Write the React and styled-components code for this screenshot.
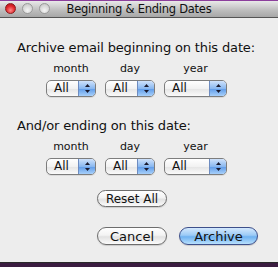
import styled, { createGlobalStyle } from "styled-components";

const GlobalStyle = createGlobalStyle`
  html, body {
    margin: 0;
    padding: 0;
    background: #4a2352;
  }
  body {
    font-family: "Lucida Grande", "DejaVu Sans", sans-serif;
    -webkit-font-smoothing: antialiased;
  }
`;

const Desktop = styled.div`
  width: 278px;
  height: 267px;
  padding-top: 1px;
  box-sizing: border-box;
  background: linear-gradient(#8c3f9c 0 1px, #3b1c40 1px);
`;

const Window = styled.div`
  width: 278px;
  height: 262px;
  display: flex;
  flex-direction: column;
  background: #ededed;
  border-bottom: 1px solid #2a2a2a;
  box-sizing: border-box;
`;

const TitleBar = styled.div`
  position: relative;
  height: 16px;
  display: flex;
  align-items: center;
  justify-content: center;
  background: linear-gradient(#e9e9e9, #bcbcbc 60%, #a7a7a7);
  border-bottom: 1px solid #555;
  flex-shrink: 0;
`;

const Lights = styled.div`
  position: absolute;
  left: 5px;
  top: 2px;
  display: flex;
  gap: 6px;
`;

const Light = styled.span`
  width: 11px;
  height: 11px;
  border-radius: 50%;
  box-sizing: border-box;
  border: 1px solid ${(p) => (p.$red ? "#8a1d1d" : "#9a9a9a")};
  background: ${(p) =>
    p.$red
      ? "radial-gradient(circle at 50% 70%, #ff8a8a, #e0262a 55%, #a5151a)"
      : "radial-gradient(circle at 50% 70%, #f4f4f4, #d6d6d6 60%, #bcbcbc)"};
`;

const Title = styled.span`
  font-size: 11.5px;
  letter-spacing: -0.25px;
  color: #111;
`;

const Content = styled.div`
  display: flex;
  flex-direction: column;
  padding: 22px 0 0 17px;
`;

const Heading = styled.div`
  font-size: 13px;
  line-height: 16px;
  letter-spacing: -0.15px;
  color: #111;
  margin-top: ${(p) => p.$top || 0}px;
`;

const DateRow = styled.div`
  display: flex;
  gap: 9px;
  padding-left: 29px;
  margin-top: 6px;
`;

const Field = styled.div`
  display: flex;
  flex-direction: column;
  align-items: stretch;
  width: ${(p) => p.$w}px;
  gap: 4px;
`;

const Label = styled.span`
  font-size: 11px;
  line-height: 14px;
  color: #111;
  text-align: center;
`;

const Select = styled.div`
  height: 17px;
  display: flex;
  border: 1px solid #7d7d7d;
  border-radius: 5px;
  box-sizing: border-box;
  overflow: hidden;
  background: linear-gradient(#ffffff, #f2f2f2 50%, #e4e4e4 51%, #fafafa);
  box-shadow: 0 1px 0 rgba(0, 0, 0, 0.08);
`;

const SelectText = styled.span`
  flex: 1;
  font-size: 12px;
  line-height: 15px;
  padding-left: 7px;
  color: #111;
`;

const Arrows = styled.span`
  width: 16px;
  display: flex;
  align-items: center;
  justify-content: center;
  border-left: 1px solid #6e8cc0;
  background: linear-gradient(#cfe2fb, #8ab8f0 50%, #5d9ae8 51%, #a8d0fa);
`;

const ResetWrap = styled.div`
  display: flex;
  padding-left: 80px;
  margin-top: 15px;
`;

const Actions = styled.div`
  display: flex;
  gap: 12px;
  padding-left: 80px;
  margin-top: 20px;
`;

const Button = styled.button`
  height: ${(p) => p.$h || 17}px;
  width: ${(p) => p.$w}px;
  padding: 0;
  font-family: inherit;
  font-size: ${(p) => p.$fs || 12}px;
  line-height: 1;
  color: #111;
  border-radius: 9px;
  border: 1px solid ${(p) => (p.$primary ? "#3d4f8a" : "#6d6d6d")};
  background: ${(p) =>
    p.$primary
      ? "linear-gradient(#d4e8fd, #9ccbf6 45%, #6fb2f1 55%, #b8e0fd)"
      : "linear-gradient(#ffffff, #f3f3f3 45%, #e2e2e2 55%, #fbfbfb)"};
  box-shadow: 0 1px 1px rgba(0, 0, 0, 0.15);
`;

function ArrowIcon() {
  return (
    <svg width="7" height="11" viewBox="0 0 7 11">
      <path d="M3.5 1 L6 4 L1 4 Z" fill="#1a1a2e" />
      <path d="M3.5 10 L6 7 L1 7 Z" fill="#1a1a2e" />
    </svg>
  );
}

function DateSelects() {
  const fields = [
    { label: "month", w: 50 },
    { label: "day", w: 50 },
    { label: "year", w: 63 },
  ];
  return (
    <DateRow>
      {fields.map((f) => (
        <Field key={f.label} $w={f.w}>
          <Label>{f.label}</Label>
          <Select>
            <SelectText>All</SelectText>
            <Arrows>
              <ArrowIcon />
            </Arrows>
          </Select>
        </Field>
      ))}
    </DateRow>
  );
}

export default function App() {
  return (
    <>
      <GlobalStyle />
      <Desktop>
        <Window>
          <TitleBar>
            <Lights>
              <Light $red />
              <Light />
              <Light />
            </Lights>
            <Title>Beginning &amp; Ending Dates</Title>
          </TitleBar>
          <Content>
            <Heading>Archive email beginning on this date:</Heading>
            <DateSelects />
            <Heading $top={21}>And/or ending on this date:</Heading>
            <DateSelects />
            <ResetWrap>
              <Button $w={70}>Reset All</Button>
            </ResetWrap>
            <Actions>
              <Button $w={70} $h={18} $fs={13}>
                Cancel
              </Button>
              <Button $w={79} $h={18} $fs={13} $primary>
                Archive
              </Button>
            </Actions>
          </Content>
        </Window>
      </Desktop>
    </>
  );
}
